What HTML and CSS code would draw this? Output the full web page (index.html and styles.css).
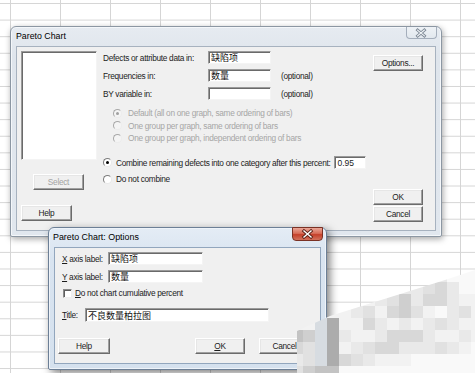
FILE: index.html
```html
<!DOCTYPE html>
<html>
<head>
<meta charset="utf-8">
<link rel="stylesheet" href="styles.css">
</head>
<body>
<div class="desk">

  <div class="win win-main">
    <div class="tbar">
      <span class="ttl">Pareto Chart</span>
      <span class="xbtn xbtn-in">
        <svg width="31" height="12" viewBox="0 0 31 12"><path d="M12 3 L19 9 M19 3 L12 9" stroke="#7d8895" stroke-width="3" stroke-linecap="square" fill="none"/><path d="M12 3 L19 9 M19 3 L12 9" stroke="#f2f5f8" stroke-width="1.1" stroke-linecap="square" fill="none"/></svg>
      </span>
    </div>
    <div class="client main-client">
      <div class="col-left">
        <div class="listbox"></div>
        <div class="btn dis sel">Select</div>
        <div class="btn help">Help</div>
      </div>
      <div class="col-mid">
        <div class="frow r1"><span class="lbl">Defects or attribute data in:</span><span class="field f63 cjk">缺陷项</span></div>
        <div class="frow"><span class="lbl">Frequencies in:</span><span class="field f63 cjk">数量</span><span class="opt">(optional)</span></div>
        <div class="frow"><span class="lbl">BY variable in:</span><span class="field f63"></span><span class="opt">(optional)</span></div>
        <div class="rgroup">
          <div class="rrow"><span class="radio dis on"></span><span class="rtd">Default (all on one graph, same ordering of bars)</span></div>
          <div class="rrow"><span class="radio dis"></span><span class="rtd">One group per graph, same ordering of bars</span></div>
          <div class="rrow"><span class="radio dis"></span><span class="rtd">One group per graph, independent ordering of bars</span></div>
        </div>
        <div class="crow c1"><span class="radio on"></span><span class="rt">Combine remaining defects into one category after this percent:</span><span class="field pct">0.95</span></div>
        <div class="crow c2"><span class="radio"></span><span class="rt">Do not combine</span></div>
      </div>
      <div class="col-right">
        <div class="btn optbtn">Options...</div>
        <div class="btn okbtn">OK</div>
        <div class="btn cancelbtn">Cancel</div>
      </div>
    </div>
  </div>

  <div class="win win-opt">
    <div class="tbar">
      <span class="ttl ttl-opt">Pareto Chart: Options</span>
      <span class="xbtn xbtn-act">
        <svg width="29" height="12" viewBox="0 0 29 12"><path d="M11 3 L18 9 M18 3 L11 9" stroke="#5b2218" stroke-width="3.2" stroke-linecap="square" fill="none"/><path d="M11 3 L18 9 M18 3 L11 9" stroke="#ffffff" stroke-width="1.4" stroke-linecap="square" fill="none"/></svg>
      </span>
    </div>
    <div class="client opt-client">
      <div class="orow ox"><span class="olbl"><u>X</u> axis label:</span><span class="field f95 cjk">缺陷项</span></div>
      <div class="orow oy"><span class="olbl"><u>Y</u> axis label:</span><span class="field f95 cjk">数量</span></div>
      <div class="chkrow"><span class="chk"></span><span class="chktxt"><u>D</u>o not chart cumulative percent</span></div>
      <div class="orow otitle"><span class="tlbl"><u>T</u>itle:</span><span class="field f184 cjk">不良数量柏拉图</span></div>
      <div class="obtns">
        <div class="btn ohelp">Help</div>
        <div class="btn ook"><u>O</u>K</div>
        <div class="btn ocancel">Cancel</div>
      </div>
    </div>
  </div>

  <div class="mosaic">
    <span class="g0"></span><span class="g0"></span><span class="g0"></span><span class="g0"></span><span class="g0"></span><span class="g0"></span><span class="g0"></span><span class="g0"></span><span class="g0"></span><span class="g0"></span><span class="g0"></span><span class="g1"></span><span class="g2"></span><span class="g0"></span><span class="g0"></span><span class="g0"></span>
    <span class="g1"></span><span class="g1"></span><span class="g1"></span><span class="g1"></span><span class="g1"></span><span class="g1"></span><span class="g1"></span><span class="g1"></span><span class="g1"></span><span class="g2"></span><span class="g2"></span><span class="g3"></span><span class="g4"></span><span class="g2"></span><span class="g0"></span><span class="g0"></span>
    <span class="g1"></span><span class="g1"></span><span class="g1"></span><span class="g1"></span><span class="g1"></span><span class="g1"></span><span class="g1"></span><span class="g2"></span><span class="g3"></span><span class="g5"></span><span class="g2"></span><span class="g4"></span><span class="g4"></span><span class="g2"></span><span class="g1"></span><span class="g1"></span>
    <span class="g1"></span><span class="g1"></span><span class="g1"></span><span class="g1"></span><span class="g1"></span><span class="g2"></span><span class="g3"></span><span class="g1"></span><span class="g4"></span><span class="g5"></span><span class="g3"></span><span class="g1"></span><span class="g0"></span><span class="g2"></span><span class="g3"></span><span class="g1"></span>
    <span class="g1"></span><span class="g1"></span><span class="gb"></span><span class="g7"></span><span class="g1"></span><span class="g1"></span><span class="g4"></span><span class="g2"></span><span class="g1"></span><span class="g2"></span><span class="g1"></span><span class="g2"></span><span class="g3"></span><span class="g2"></span><span class="g1"></span><span class="g1"></span>
    <span class="g6"></span><span class="g5"></span><span class="gb"></span><span class="g7"></span><span class="g2"></span><span class="g1"></span><span class="g1"></span><span class="g2"></span><span class="g4"></span><span class="g4"></span><span class="g4"></span><span class="g2"></span><span class="g1"></span><span class="g1"></span><span class="g2"></span><span class="g1"></span>
    <span class="g4"></span><span class="g3"></span><span class="gb"></span><span class="g7"></span><span class="g1"></span><span class="g2"></span><span class="g3"></span><span class="g4"></span><span class="g4"></span><span class="g2"></span><span class="g2"></span><span class="g2"></span><span class="g3"></span><span class="g2"></span><span class="g1"></span><span class="g0"></span>
    <span class="g2"></span><span class="g3"></span><span class="gb"></span><span class="g7"></span><span class="g4"></span><span class="g3"></span><span class="g2"></span><span class="g1"></span><span class="g1"></span><span class="g1"></span><span class="g0"></span><span class="g0"></span><span class="g0"></span><span class="g0"></span><span class="g0"></span><span class="g0"></span>
    <span class="g3"></span><span class="g5"></span><span class="g6"></span><span class="g6"></span><span class="g0"></span><span class="g0"></span><span class="g0"></span><span class="g0"></span><span class="g0"></span><span class="g0"></span><span class="g0"></span><span class="g0"></span><span class="g0"></span><span class="g0"></span><span class="g0"></span><span class="g0"></span>
  </div>

</div>
</body>
</html>
```

FILE: styles.css
```css
html, body {
  margin: 0;
  padding: 0;
}
body {
  width: 475px;
  height: 373px;
  overflow: hidden;
  background-color: #ffffff;
  font-family: "Liberation Sans", Arial, sans-serif;
}
.desk {
  position: relative;
  width: 475px;
  height: 373px;
  background-color: #ffffff;
  background-image:
    linear-gradient(to right, #d5d5d5 1px, transparent 1px),
    linear-gradient(to bottom, #d5d5d5 1px, transparent 1px);
  background-size: 50px 16.6px;
  background-position: 10px 3px;
  font-size: 8.3px;
  letter-spacing: -0.3px;
  color: #1c1c1c;
}

/* windows */
.win {
  position: absolute;
  box-sizing: border-box;
  padding: 0 5px 5px 5px;
  border-radius: 6px 6px 2px 2px;
  display: flex;
  flex-direction: column;
}
.win-main {
  left: 10px;
  top: 26px;
  width: 432px;
  height: 211px;
  border: 1px solid #8c97a3;
  background: linear-gradient(#e6ebf1, #dfe5ec 30px, #e1e7ee);
  box-shadow: 1px 2px 6px rgba(0, 0, 0, 0.35), inset 0 0 0 1px #f4f7fa;
}
.win-opt {
  left: 48px;
  top: 227px;
  width: 279px;
  height: 143px;
  border: 1px solid #6c7f96;
  background: linear-gradient(#e4ecf5, #d9e4f0 30px, #d5e1ee);
  box-shadow: 3px 3px 8px rgba(0, 0, 0, 0.5), inset 0 0 0 1px #eef3f9;
}
.tbar {
  height: 19px;
  flex: none;
  display: flex;
  justify-content: space-between;
  align-items: flex-start;
}
.ttl {
  font-size: 8.8px;
  letter-spacing: 0;
  color: #000;
  line-height: 19px;
}
.ttl-opt {
  margin-left: -1px;
  font-size: 8.9px;
}
.xbtn {
  display: flex;
  box-sizing: border-box;
  border-radius: 0 0 4px 4px;
}
.xbtn-in {
  width: 31px;
  height: 12px;
  margin-right: -1px;
  border: 1px solid #a4aebb;
  border-top: none;
  background: linear-gradient(#eef2f6, #e2e8ee);
}
.xbtn-in svg {
  margin-left: -1px;
}
.xbtn-act {
  width: 31px;
  height: 14px;
  margin-top: -1px;
  margin-right: -2px;
  border: 1px solid #7a3124;
  background: linear-gradient(#eaa697, #d86d58 45%, #c5402a 55%, #d2725d);
  align-items: center;
}
.client {
  box-sizing: border-box;
  background: #f0f0f0;
  flex: none;
}
.main-client {
  height: 185px;
  border: 1px solid #a7b2bf;
  display: flex;
  align-items: flex-start;
}
.opt-client {
  height: 117px;
  border: 1px solid #92a6bd;
  display: flex;
  flex-direction: column;
}

/* controls */
.btn {
  box-sizing: border-box;
  height: 16px;
  background: #f0f0f0;
  border: 1px solid;
  border-color: #ffffff #6b6b6b #6b6b6b #ffffff;
  box-shadow: inset -1px -1px #a0a0a0, inset 1px 1px #e6e6e6;
  display: flex;
  align-items: center;
  justify-content: center;
  color: #1c1c1c;
}
.btn.dis {
  color: #a3a3a3;
}
.field {
  box-sizing: border-box;
  height: 13px;
  background: #ffffff;
  border: 1px solid;
  border-color: #9a9a9a #f4f4f4 #f4f4f4 #9a9a9a;
  box-shadow: inset 1px 1px #6a6a6a;
  display: flex;
  align-items: center;
  padding-left: 2px;
}
.cjk {
  font-family: "Noto Sans CJK SC", "Liberation Sans", sans-serif;
  font-size: 9px;
  letter-spacing: 0;
  color: #111;
}
.listbox {
  box-sizing: border-box;
  margin-top: 4px;
  height: 109px;
  background: #ffffff;
  border: 1px solid;
  border-color: #9a9a9a #f4f4f4 #f4f4f4 #9a9a9a;
  box-shadow: inset 1px 1px #6a6a6a;
}

/* main layout */
.col-left {
  margin-left: 4px;
  width: 76px;
  display: flex;
  flex-direction: column;
}
.sel {
  margin-top: 14px;
  margin-left: 12px;
  width: 51px;
}
.help {
  margin-top: 15px;
  width: 51px;
}
.col-mid {
  margin-left: 6px;
  display: flex;
  flex-direction: column;
}
.frow {
  height: 13px;
  margin-top: 5px;
  display: flex;
  align-items: center;
}
.frow.r1 {
  margin-top: 4px;
}
.lbl {
  width: 105px;
  flex: none;
}
.f63 {
  width: 63px;
}
.opt {
  margin-left: 10px;
}
.rgroup {
  margin-top: 7px;
  display: flex;
  flex-direction: column;
  padding-left: 10px;
}
.rrow {
  height: 12.5px;
  display: flex;
  align-items: center;
}
.rtd {
  margin-left: 6px;
  color: #a6a6a6;
}
.radio {
  box-sizing: border-box;
  width: 9px;
  height: 9px;
  flex: none;
  border-radius: 50%;
  border: 1px solid;
  border-color: #7c7c7c #e8e8e8 #e8e8e8 #7c7c7c;
  background: #ffffff;
  display: flex;
  align-items: center;
  justify-content: center;
}
.radio.on::after {
  content: "";
  width: 3px;
  height: 3px;
  border-radius: 50%;
  background: #000;
}
.radio.dis {
  border-color: #a8a8a8 #ececec #ececec #a8a8a8;
  background: #f4f4f4;
}
.radio.dis.on::after {
  background: #a0a0a0;
}
.crow {
  display: flex;
  align-items: center;
}
.c1 {
  margin-top: 11px;
  height: 14px;
}
.c2 {
  margin-top: 3px;
  height: 13px;
}
.rt {
  margin-left: 4px;
}
.pct {
  width: 32px;
  margin-left: 4px;
  letter-spacing: 0;
  font-size: 8.5px;
}
.col-right {
  margin-left: auto;
  margin-right: 12px;
  width: 50px;
  display: flex;
  flex-direction: column;
}
.optbtn {
  margin-top: 8px;
}
.okbtn {
  margin-top: 118px;
}
.cancelbtn {
  margin-top: 1px;
}

/* options dialog */
.orow {
  display: flex;
  align-items: center;
  padding-left: 7px;
}
.ox {
  margin-top: 4px;
  height: 13px;
}
.oy {
  margin-top: 5px;
  height: 13px;
}
.olbl {
  width: 46px;
  flex: none;
}
.f95 {
  width: 95px;
}
.chkrow {
  margin-top: 4px;
  height: 12px;
  display: flex;
  align-items: center;
  padding-left: 8px;
}
.chk {
  box-sizing: border-box;
  width: 9px;
  height: 9px;
  background: #fff;
  border: 1px solid;
  border-color: #8a8a8a #eeeeee #eeeeee #8a8a8a;
  box-shadow: inset 1px 1px #5e5e5e;
}
.chktxt {
  margin-left: 3px;
}
.otitle {
  margin-top: 9px;
  height: 14px;
}
.tlbl {
  width: 23px;
  flex: none;
}
.f184 {
  width: 184px;
  height: 14px;
}
.obtns {
  margin-top: 16px;
  padding-left: 3px;
  display: flex;
}
.ohelp {
  width: 52px;
}
.ook {
  width: 50px;
  margin-left: 85px;
}
.ocancel {
  width: 51px;
  margin-left: 14px;
}

/* pixelated watermark overlay */
.mosaic {
  position: absolute;
  left: 291px;
  top: 270px;
  width: 192px;
  height: 108px;
  display: grid;
  grid-template-columns: repeat(16, 12px);
  grid-auto-rows: 12px;
  clip-path: polygon(6px 103px, 6px 61px, 39px 46px, 154px 10px, 184px 0px, 184px 103px);
}
.g0 { background: #f9f9f9; }
.g1 { background: #f2f2f2; }
.g2 { background: #e9e9e9; }
.g3 { background: #e1e1e1; }
.g4 { background: #d8d8d8; }
.g5 { background: #cfcfcf; }
.g6 { background: #c3c3c3; }
.g7 { background: #acacac; }
.gb { background: #d7dce1; }
```
